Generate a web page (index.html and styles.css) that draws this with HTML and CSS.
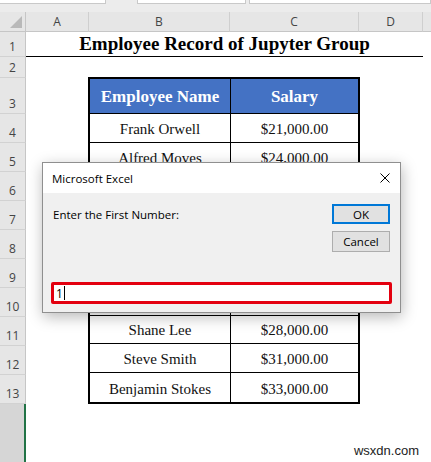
FILE: index.html
```html
<!DOCTYPE html>
<html>
<head>
<meta charset="utf-8">
<link rel="stylesheet" href="styles.css">
</head>
<body>
<div class="sheet">
  <div class="strip">
    <span class="box b1"></span>
    <span class="box b2"></span>
    <span class="box b3"></span>
  </div>
  <div class="grid">
    <div class="corner">
      <svg width="12" height="12" viewBox="0 0 12 12"><polygon points="12,0 12,12 0,12" fill="#b9b9b9"/></svg>
    </div>
    <div class="ch">A</div>
    <div class="ch">B</div>
    <div class="ch">C</div>
    <div class="ch">D</div>
    <div class="ch ch-end"></div>

    <div class="rh" style="grid-row:2">1</div>
    <div class="rh" style="grid-row:3">2</div>
    <div class="rh" style="grid-row:4">3</div>
    <div class="rh" style="grid-row:5">4</div>
    <div class="rh" style="grid-row:6">5</div>
    <div class="rh" style="grid-row:7">6</div>
    <div class="rh" style="grid-row:8">7</div>
    <div class="rh" style="grid-row:9">8</div>
    <div class="rh" style="grid-row:10">9</div>
    <div class="rh" style="grid-row:11">10</div>
    <div class="rh" style="grid-row:12">11</div>
    <div class="rh" style="grid-row:13">12</div>
    <div class="rh" style="grid-row:14">13</div>
    <div class="rh rh-empty"></div>

    <div class="title">Employee Record of Jupyter Group</div>

    <div class="table">
      <div class="th">Employee Name</div><div class="th">Salary</div>
      <div class="td">Frank Orwell</div><div class="td">$21,000.00</div>
      <div class="td">Alfred Moves</div><div class="td">$24,000.00</div>
      <div class="td"></div><div class="td"></div>
      <div class="td"></div><div class="td"></div>
      <div class="td"></div><div class="td"></div>
      <div class="td"></div><div class="td"></div>
      <div class="td"></div><div class="td"></div>
      <div class="td">Shane Lee</div><div class="td">$28,000.00</div>
      <div class="td">Steve Smith</div><div class="td">$31,000.00</div>
      <div class="td last">Benjamin Stokes</div><div class="td last">$33,000.00</div>
    </div>
  </div>

  <div class="dialog">
    <div class="dlg-title">
      <span>Microsoft Excel</span>
      <svg class="close" width="10" height="10" viewBox="0 0 10 10"><path d="M0.5 0.5 L9.5 9.5 M9.5 0.5 L0.5 9.5" stroke="#000" stroke-width="1" fill="none"/></svg>
    </div>
    <div class="dlg-body">
      <div class="dlg-top">
        <div class="prompt">Enter the First Number:</div>
        <div class="btns">
          <div class="btn ok">OK</div>
          <div class="btn">Cancel</div>
        </div>
      </div>
      <div class="input"><span>1</span><span class="caret"></span></div>
    </div>
  </div>

  <div class="watermark">wsxdn.com</div>
</div>
</body>
</html>
```

FILE: styles.css
```css
html, body {
  margin: 0;
  padding: 0;
  background: #ffffff;
}
.sheet {
  position: relative;
  width: 431px;
  height: 462px;
  overflow: hidden;
  background: #ffffff;
  font-family: "Open Sans", "Liberation Sans", sans-serif;
}
.strip {
  height: 12px;
  background: #ececec;
  display: flex;
  align-items: flex-start;
}
.box {
  display: block;
  height: 3px;
  background: #ffffff;
  border: 1px solid #c9c9c9;
  border-top: none;
}
.b1 { width: 105px; margin-left: -1px; }
.b2 { width: 108px; margin-left: 31px; }
.b3 { width: 180px; margin-left: 3px; }

.grid {
  display: grid;
  grid-template-columns: 26px 63px 141px 129px 64px 1fr;
  grid-template-rows: 20px 25px 21px 36px repeat(10, 29px) 1fr;
  height: 450px;
  background: #ffffff;
}
.corner {
  grid-row: 1;
  grid-column: 1;
  background: #e6e6e6;
  border-right: 1px solid #c6c6c6;
  border-bottom: 1px solid #c6c6c6;
  display: flex;
  align-items: flex-end;
  justify-content: flex-end;
  padding: 0 3px 3px 0;
}
.ch {
  grid-row: 1;
  background: #e6e6e6;
  border-right: 1px solid #cfcfcf;
  border-bottom: 1px solid #c6c6c6;
  display: flex;
  align-items: center;
  justify-content: center;
  font-size: 12px;
  line-height: 14px;
  color: #444444;
}
.ch-end {
  border-right: none;
}
.rh {
  grid-column: 1;
  background: #e6e6e6;
  border-right: 1px solid #c6c6c6;
  border-bottom: 1px solid #d2d2d2;
  display: flex;
  align-items: flex-end;
  justify-content: center;
  padding-bottom: 2px;
  font-size: 12px;
  line-height: 14px;
  color: #444444;
}
.rh-empty {
  grid-row: 15;
  background: #d6d6d6;
  border-right: 2px solid #217346;
  border-bottom: none;
}
.title {
  grid-row: 2;
  grid-column: 2 / 6;
  border-bottom: 1px solid #000000;
  display: flex;
  align-items: flex-end;
  justify-content: center;
  padding-bottom: 1px;
  font-family: "Liberation Serif", "Times New Roman", serif;
  font-weight: bold;
  font-size: 19px;
  line-height: 22px;
  color: #000000;
}
.table {
  grid-row: 4 / 15;
  grid-column: 3 / 5;
  margin: -1px -1px 0 -1px;
  border: 2px solid #000000;
  display: grid;
  grid-template-columns: 141px 1fr;
  grid-template-rows: 35px repeat(10, 1fr);
}
.th, .td {
  display: flex;
  align-items: center;
  justify-content: center;
  border-bottom: 1px solid #000000;
  font-family: "Liberation Serif", "Times New Roman", serif;
  color: #000000;
}
.th:nth-child(odd), .td:nth-child(odd) {
  border-right: 1px solid #000000;
}
.th {
  background: #4472c4;
  color: #ffffff;
  font-weight: bold;
  font-size: 17px;
  padding-top: 2px;
}
.td {
  font-size: 15px;
  font-weight: normal;
  padding-top: 3px;
  color: #111111;
}
.td.last {
  border-bottom: none;
}

.dialog {
  position: absolute;
  left: 42px;
  top: 162px;
  width: 357px;
  height: 149px;
  border: 1px solid #8f8f8f;
  background: #f0f0f0;
  box-shadow: 1px 4px 14px rgba(0, 0, 0, 0.28);
  display: flex;
  flex-direction: column;
  font-size: 11.5px;
  line-height: 15px;
  color: #000000;
}
.dlg-title {
  height: 30px;
  background: #ffffff;
  display: flex;
  align-items: center;
  justify-content: space-between;
  padding: 0 10px 0 9px;
  font-size: 11.5px;
}
.close {
  display: block;
}
.dlg-body {
  flex: 1;
  display: flex;
  flex-direction: column;
  justify-content: space-between;
  padding: 11px 8px 8px 8px;
}
.dlg-top {
  display: flex;
  justify-content: space-between;
  align-items: flex-start;
}
.prompt {
  margin-top: 3px;
  margin-left: 2px;
}
.btns {
  display: flex;
  flex-direction: column;
  gap: 7px;
  margin-right: 2px;
}
.btn {
  width: 56px;
  height: 19px;
  border: 1px solid #adadad;
  background: #e1e1e1;
  display: flex;
  align-items: center;
  justify-content: center;
}
.btn.ok {
  width: 54px;
  height: 16px;
  border: 2px solid #0078d7;
}
.input {
  height: 16px;
  border: 3px solid #e3000f;
  border-radius: 2px;
  background: #ffffff;
  display: flex;
  align-items: center;
  padding-left: 2px;
  font-size: 12px;
}
.caret {
  display: inline-block;
  width: 1px;
  height: 14px;
  background: #000000;
  margin-left: 1px;
}
.watermark {
  position: absolute;
  right: 12px;
  bottom: 4px;
  font-family: "Liberation Sans", Arial, sans-serif;
  font-size: 13px;
  line-height: 15px;
  color: #222222;
}
```
